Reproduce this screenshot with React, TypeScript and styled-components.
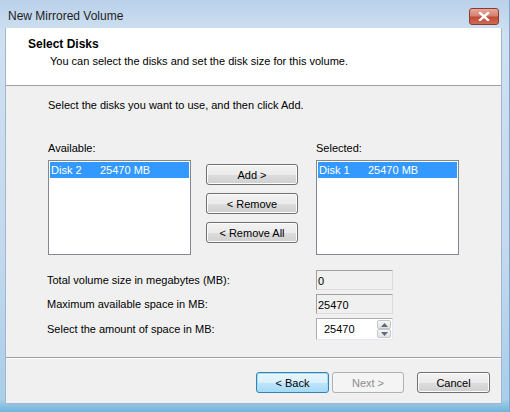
import { createGlobalStyle, styled } from "styled-components"

const GlobalStyle = createGlobalStyle`
  html, body {
    margin: 0;
    padding: 0;
    background: #6fb3dc;
  }
  body {
    font-family: "Liberation Sans", Arial, sans-serif;
    font-size: 11px;
    color: #000;
  }
`

const Window = styled.div`
  width: 510px;
  height: 412px;
  box-sizing: border-box;
  display: flex;
  flex-direction: column;
  padding: 0 7px 8px 5px;
  background: linear-gradient(to bottom, #b9d1ea 0%, #cfe0f1 8%, #c4d9ee 60%, #a9cfe9 97%, #6fb3dc 100%);
  border-right: 1px solid #7aa6cf;
`

const TitleBar = styled.div`
  height: 28px;
  display: flex;
  align-items: center;
  justify-content: space-between;
  padding-right: 3px;
`

const Title = styled.span`
  font-size: 12px;
  color: #1e1e1e;
  padding: 3px 0 0 3px;
`

const CloseButton = styled.div`
  width: 30px;
  height: 17px;
  margin-top: 4px;
  box-sizing: border-box;
  border: 1px solid #8c3a2e;
  border-radius: 3px;
  background: linear-gradient(to bottom, #e9a99c 0%, #d7806f 45%, #c24a36 55%, #d06a54 100%);
  display: flex;
  align-items: center;
  justify-content: center;
`

const Client = styled.div`
  flex: 1;
  display: flex;
  flex-direction: column;
  background: #f0f0f0;
  border: 1px solid #9fb7d0;
  border-top: none;
`

const Header = styled.div`
  height: 58px;
  box-sizing: border-box;
  background: #fff;
  border-bottom: 1px solid #a0a0a0;
  padding: 9px 0 0 22px;
`

const HeaderTitle = styled.div`
  font-weight: bold;
  font-size: 12px;
  line-height: 15px;
`

const HeaderSub = styled.div`
  margin: 2px 0 0 22px;
  line-height: 15px;
`

const Body = styled.div`
  flex: 1;
  padding: 12px 0 0 42px;
  border-bottom: 1px solid #a0a0a0;
  box-shadow: 0 1px 0 #fff;
`

const Instruction = styled.div`
  line-height: 15px;
`

const Lists = styled.div`
  display: flex;
  margin-top: 28px;
`

const ListColumn = styled.div`
  display: flex;
  flex-direction: column;
  width: 143px;
`

const Label = styled.div`
  line-height: 15px;
  margin-bottom: 4px;
`

const ListBox = styled.div`
  height: 95px;
  box-sizing: border-box;
  border: 1px solid #828790;
  background: #fff;
  padding: 1px;
`

const ListItem = styled.div<{ $selected?: boolean }>`
  display: flex;
  height: 16px;
  align-items: center;
  padding-left: 1px;
  background: ${(p) => (p.$selected ? "#3399ff" : "transparent")};
  color: ${(p) => (p.$selected ? "#fff" : "#000")};
  span:first-child {
    width: 49px;
  }
`

const MoveButtons = styled.div`
  display: flex;
  flex-direction: column;
  gap: 8px;
  margin: 23px 18px 0 15px;
`

const Button = styled.button<{ $width?: number; $focused?: boolean }>`
  width: ${(p) => p.$width ?? 92}px;
  height: 21px;
  padding: 0;
  font-family: "Liberation Sans", Arial, sans-serif;
  font-size: 11px;
  color: #000;
  border-radius: 3px;
  border: 1px solid ${(p) => (p.$focused ? "#3c7fb1" : "#707070")};
  background: ${(p) =>
    p.$focused
      ? "linear-gradient(to bottom, #eaf6fd 0%, #d9f0fc 50%, #bee6fd 51%, #a7d9f5 100%)"
      : "linear-gradient(to bottom, #f2f2f2 0%, #ebebeb 50%, #dddddd 51%, #cfcfcf 100%)"};
  box-shadow: inset 0 0 0 1px ${(p) => (p.$focused ? "#9ee0f8" : "#fcfcfc")};

  &:disabled {
    color: #8d8d8d;
    border-color: #adb2b5;
    background: #f4f4f4;
    box-shadow: none;
  }
`

const Fields = styled.div`
  display: grid;
  grid-template-columns: 268px 77px;
  row-gap: 4px;
  margin-top: 15px;
  align-items: center;
`

const FieldLabel = styled.div`
  line-height: 15px;
  margin-left: -1px;
`

const ReadOnlyField = styled.div`
  height: 20px;
  box-sizing: border-box;
  border: 1px solid #a7a7a7;
  border-color: #a0a0a0 #dcdcdc #dcdcdc #a0a0a0;
  background: #f0f0f0;
  padding: 3px 0 0 1px;
  line-height: 14px;
`

const Spinner = styled.div`
  height: 22px;
  box-sizing: border-box;
  border: 1px solid #abadb3;
  border-color: #abadb3 #e3e9ef #e3e9ef #abadb3;
  background: #fff;
  display: flex;
  align-items: center;
  justify-content: space-between;
  padding-left: 7px;
  padding-right: 1px;
`

const SpinArrows = styled.div`
  display: flex;
  flex-direction: column;
`

const SpinArrow = styled.div`
  width: 14px;
  height: 9px;
  box-sizing: border-box;
  border: 1px solid #c3c6cb;
  border-radius: 2px;
  background: linear-gradient(to bottom, #f6f6f6, #e2e2e2);
  display: flex;
  align-items: center;
  justify-content: center;
`

const Footer = styled.div`
  height: 45px;
  display: flex;
  justify-content: flex-end;
  align-items: flex-start;
  padding: 14px 11px 0 0;
  box-sizing: border-box;
`

const Gap = styled.div<{ $size: number }>`
  width: ${(p) => p.$size}px;
`

function Arrow({ up }: { up?: boolean }) {
  return (
    <svg width="7" height="4" viewBox="0 0 7 4">
      <path d={up ? "M0 4 L3.5 0 L7 4 Z" : "M0 0 L3.5 4 L7 0 Z"} fill="#5b6b7c" />
    </svg>
  )
}

export default function App() {
  return (
    <>
      <GlobalStyle />
      <Window>
        <TitleBar>
          <Title>New Mirrored Volume</Title>
          <CloseButton>
            <svg width="12" height="9" viewBox="0 0 12 9">
              <path d="M2 1 L10 8 M10 1 L2 8" stroke="#fff" strokeWidth="2.4" strokeLinecap="square" />
            </svg>
          </CloseButton>
        </TitleBar>
        <Client>
          <Header>
            <HeaderTitle>Select Disks</HeaderTitle>
            <HeaderSub>You can select the disks and set the disk size for this volume.</HeaderSub>
          </Header>
          <Body>
            <Instruction>Select the disks you want to use, and then click Add.</Instruction>
            <Lists>
              <ListColumn>
                <Label>Available:</Label>
                <ListBox>
                  <ListItem $selected>
                    <span>Disk 2</span>
                    <span>25470 MB</span>
                  </ListItem>
                </ListBox>
              </ListColumn>
              <MoveButtons>
                <Button>Add &gt;</Button>
                <Button>&lt; Remove</Button>
                <Button>&lt; Remove All</Button>
              </MoveButtons>
              <ListColumn>
                <Label>Selected:</Label>
                <ListBox>
                  <ListItem $selected>
                    <span>Disk 1</span>
                    <span>25470 MB</span>
                  </ListItem>
                </ListBox>
              </ListColumn>
            </Lists>
            <Fields>
              <FieldLabel>Total volume size in megabytes (MB):</FieldLabel>
              <ReadOnlyField>0</ReadOnlyField>
              <FieldLabel>Maximum available space in MB:</FieldLabel>
              <ReadOnlyField>25470</ReadOnlyField>
              <FieldLabel>Select the amount of space in MB:</FieldLabel>
              <Spinner>
                <span>25470</span>
                <SpinArrows>
                  <SpinArrow>
                    <Arrow up />
                  </SpinArrow>
                  <SpinArrow>
                    <Arrow />
                  </SpinArrow>
                </SpinArrows>
              </Spinner>
            </Fields>
          </Body>
          <Footer>
            <Button $width={73} $focused>
              &lt; Back
            </Button>
            <Gap $size={3} />
            <Button $width={72} disabled>
              Next &gt;
            </Button>
            <Gap $size={13} />
            <Button $width={73}>Cancel</Button>
          </Footer>
        </Client>
      </Window>
    </>
  )
}
